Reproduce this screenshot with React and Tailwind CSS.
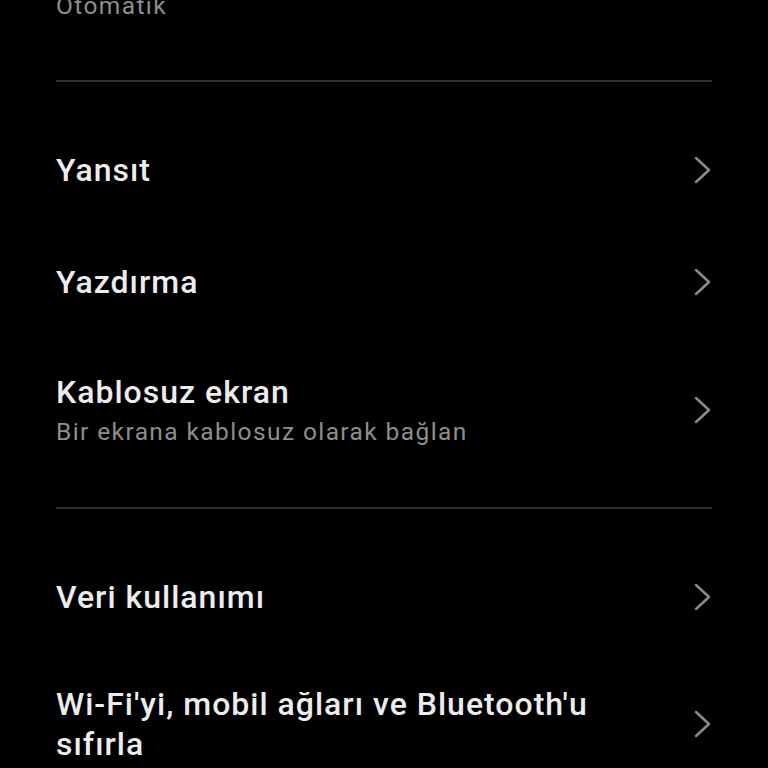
const Chevron = () => (
  <svg width="20" height="28" viewBox="0 0 20 28" fill="none" className="shrink-0">
    <polyline points="4,2 17,14 4,26" stroke="#8a8a8a" strokeWidth="2.5" strokeLinecap="round" strokeLinejoin="round" />
  </svg>
);

const Row = ({ title, subtitle, className = "py-[36px]" }) => (
  <div className={`flex items-center justify-between ${className}`}>
    <div className="flex flex-col pr-10">
      <div className="text-[32px] leading-[40px] font-medium tracking-[1px] text-[#ececec]">{title}</div>
      {subtitle && (
        <div className="mt-[4px] text-[24.5px] leading-[32px] tracking-[1.4px] text-[#8e8e8e]">{subtitle}</div>
      )}
    </div>
    <Chevron />
  </div>
);

const Divider = () => <div className="h-[2px] bg-[#303030]" />;

export default function App() {
  return (
    <div
      className="w-[768px] h-[768px] overflow-hidden bg-black px-[56px]"
      style={{ fontFamily: "Roboto, 'Noto Sans', sans-serif" }}
    >
      <div className="-mt-[10px] text-[24.5px] leading-[32px] tracking-[1.4px] text-[#8e8e8e]">Otomatik</div>
      <div className="mt-[58px]">
        <Divider />
      </div>
      <div className="pt-[32px]">
        <Row title="Yansıt" />
        <Row title="Yazdırma" />
        <Row
          title="Kablosuz ekran"
          subtitle="Bir ekrana kablosuz olarak bağlan"
          className="pt-[34px] pb-[36px]"
        />
      </div>
      <div className="mt-[23px]">
        <Divider />
      </div>
      <div className="pt-[32px]">
        <Row title="Veri kullanımı" />
        <Row title="Wi-Fi'yi, mobil ağları ve Bluetooth'u sıfırla" className="pt-[31px] pb-[36px]" />
      </div>
    </div>
  );
}
